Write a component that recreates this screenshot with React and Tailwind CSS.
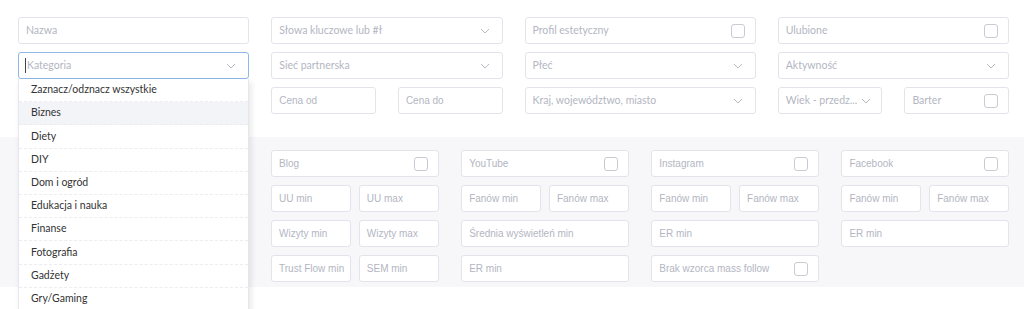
import React from "react";

const lato = { fontFamily: "Lato, 'Open Sans', sans-serif" };
const arial = { fontFamily: "'Liberation Sans', Arial, sans-serif" };

function Chevron() {
  return (
    <svg width="10" height="6" viewBox="0 0 10 6" className="shrink-0">
      <path d="M1 1 L5 5 L9 1" fill="none" stroke="#b8bbc6" strokeWidth="1" />
    </svg>
  );
}

function Check() {
  return <span className="shrink-0 w-[14px] h-[14px] rounded-[3px] border border-[#c9cbd4] bg-white" />;
}

function Field({ label, kind, font = "lato", focused }) {
  return (
    <div
      className={`relative h-[27px] flex items-center justify-between pl-[7px] rounded-[3px] border bg-white ${
        kind ? "pr-[10px]" : "pr-[2px]"
      } ${focused ? "border-[#8db8ea]" : "border-[#e3e4eb]"}`}
    >
      <span
        className={`whitespace-nowrap shrink-0 text-[#b3b6c2] ${font === "lato" ? "text-[10.5px]" : "text-[10px]"}`}
        style={font === "lato" ? lato : arial}
      >
        {focused && <span className="inline-block w-px h-[15px] bg-[#444] align-middle mr-px -ml-px" />}
        {label}
      </span>
      {kind === "select" && <span className="pr-[2px] pl-[4px]"><Chevron /></span>}
      {kind === "check" && <Check />}
    </div>
  );
}

const items = [
  "Zaznacz/odznacz wszystkie",
  "Biznes",
  "Diety",
  "DIY",
  "Dom i ogród",
  "Edukacja i nauka",
  "Finanse",
  "Fotografia",
  "Gadżety",
  "Gry/Gaming",
];

function Dropdown() {
  return (
    <div className="absolute left-0 right-0 top-[27px] z-10 bg-white border border-[#e6e7ee] border-t-0 shadow-[2px_3px_6px_rgba(0,0,0,0.10)]">
      {items.map((it, i) => (
        <div
          key={it}
          className={`h-[23.2px] flex items-center pl-[12px] text-[10.5px] text-[#333333] ${
            i === 1 ? "bg-[#f3f4f8]" : ""
          } ${i < items.length - 1 ? "border-b border-dashed border-[#ececf1]" : ""}`}
          style={lato}
        >
          {it}
        </div>
      ))}
    </div>
  );
}

function Pair({ a, b, font = "arial" }) {
  return (
    <div className="grid grid-cols-2 gap-[8px]">
      <Field label={a} font={font} />
      <Field label={b} font={font} />
    </div>
  );
}

export default function App() {
  return (
    <div className="w-[1024px] h-[309px] bg-white overflow-hidden">
      <div className="pt-[17px] pl-[18px] pr-[15px] h-[137px]">
        <div className="grid grid-cols-4 gap-x-[22px] gap-y-[8px]">
          <Field label="Nazwa" />
          <Field label="Słowa kluczowe lub #ł" kind="select" />
          <Field label="Profil estetyczny" kind="check" />
          <Field label="Ulubione" kind="check" />

          <div className="relative">
            <Field label="Kategoria" kind="select" focused />
            <Dropdown />
          </div>
          <Field label="Sieć partnerska" kind="select" />
          <Field label="Płeć" kind="select" />
          <Field label="Aktywność" kind="select" />

          <div />
          <div className="grid grid-cols-2 gap-x-[22px]">
            <Field label="Cena od" font="arial" />
            <Field label="Cena do" font="arial" />
          </div>
          <Field label="Kraj, województwo, miasto" kind="select" />
          <div className="grid grid-cols-2 gap-x-[22px]">
            <Field label="Wiek - przedz..." kind="select" />
            <Field label="Barter" kind="check" />
          </div>
        </div>
      </div>

      <div className="bg-[#f7f7f9] h-[150px] pt-[13px] pl-[271px] pr-[15px]">
        <div className="grid grid-cols-4 gap-x-[22.5px]">
          <div className="flex flex-col gap-[8px]">
            <Field label="Blog" kind="check" font="arial" />
            <Pair a="UU min" b="UU max" />
            <Pair a="Wizyty min" b="Wizyty max" />
            <Pair a="Trust Flow min" b="SEM min" />
          </div>
          <div className="flex flex-col gap-[8px]">
            <Field label="YouTube" kind="check" font="arial" />
            <Pair a="Fanów min" b="Fanów max" />
            <Field label="Średnia wyświetleń min" font="arial" />
            <Field label="ER min" font="arial" />
          </div>
          <div className="flex flex-col gap-[8px]">
            <Field label="Instagram" kind="check" font="arial" />
            <Pair a="Fanów min" b="Fanów max" />
            <Field label="ER min" font="arial" />
            <Field label="Brak wzorca mass follow" kind="check" font="arial" />
          </div>
          <div className="flex flex-col gap-[8px]">
            <Field label="Facebook" kind="check" font="arial" />
            <Pair a="Fanów min" b="Fanów max" />
            <Field label="ER min" font="arial" />
          </div>
        </div>
      </div>
    </div>
  );
}
